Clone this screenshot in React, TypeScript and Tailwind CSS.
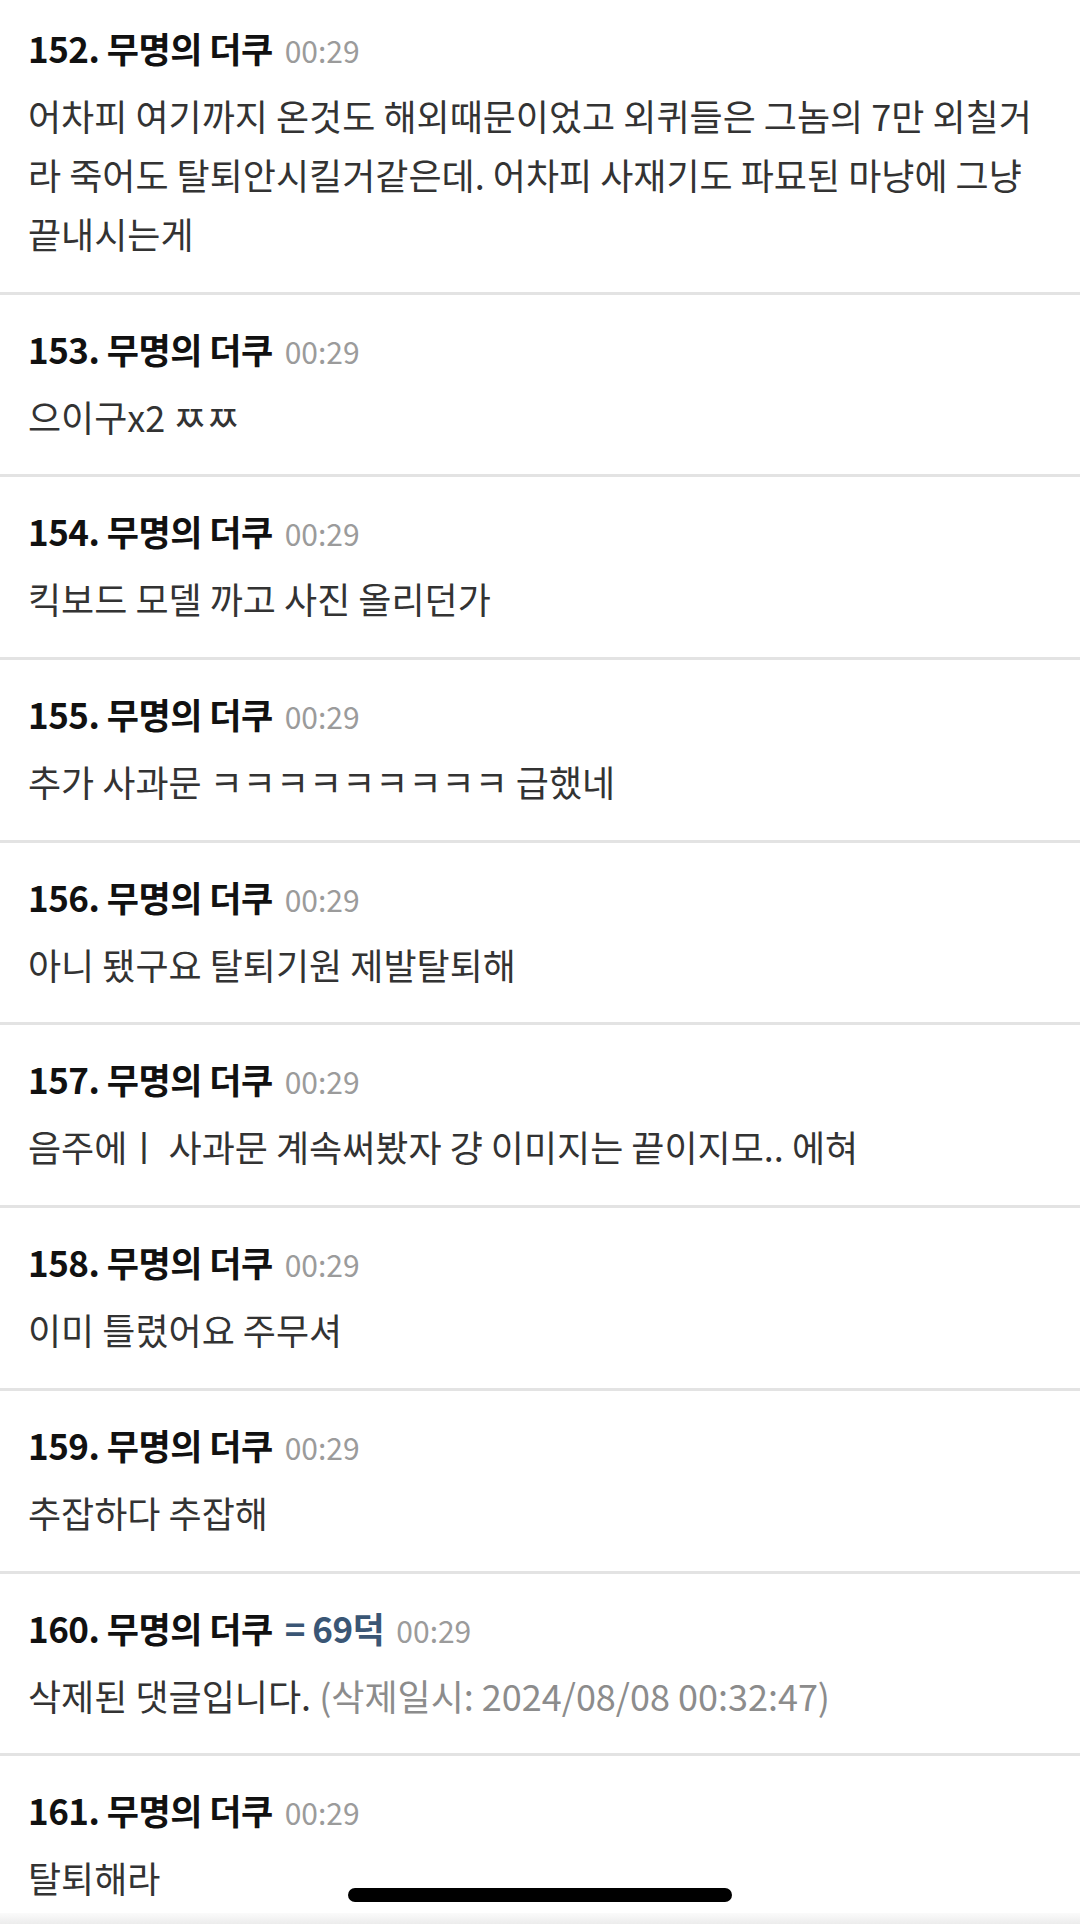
type Comment = {
  no: number;
  time: string;
  lines: string[];
  badge?: string;
  deletedAt?: string;
};

const comments: Comment[] = [
  {
    no: 152,
    time: '00:29',
    lines: [
      '어차피 여기까지 온것도 해외때문이었고 외퀴들은 그놈의 7만 외칠거',
      '라 죽어도 탈퇴안시킬거같은데. 어차피 사재기도 파묘된 마냥에 그냥',
      '끝내시는게',
    ],
  },
  { no: 153, time: '00:29', lines: ['으이구x2 ㅉㅉ'] },
  { no: 154, time: '00:29', lines: ['킥보드 모델 까고 사진 올리던가'] },
  { no: 155, time: '00:29', lines: ['추가 사과문 ㅋㅋㅋㅋㅋㅋㅋㅋㅋ 급했네'] },
  { no: 156, time: '00:29', lines: ['아니 됐구요 탈퇴기원 제발탈퇴해'] },
  { no: 157, time: '00:29', lines: ['음주에ㅣ 사과문 계속써봤자 걍 이미지는 끝이지모.. 에혀'] },
  { no: 158, time: '00:29', lines: ['이미 틀렸어요 주무셔'] },
  { no: 159, time: '00:29', lines: ['추잡하다 추잡해'] },
  {
    no: 160,
    time: '00:29',
    badge: '= 69덕',
    lines: ['삭제된 댓글입니다.'],
    deletedAt: '(삭제일시: 2024/08/08 00:32:47)',
  },
  { no: 161, time: '00:29', lines: ['탈퇴해라'] },
];

function CommentRow({ c, first }: { c: Comment; first: boolean }) {
  return (
    <div className={first ? 'mt-[-6px]' : ''}>
      {!first && <div className="h-[3px] bg-[#e3e3e3]" />}
      <div className="pl-[28px] pr-[20px] pt-[30px] pb-[28.7px]">
        {/* header: number, nickname, time */}
        <div className="flex items-baseline h-[48px] leading-[48px] whitespace-nowrap">
          <span className="text-[35px] font-bold text-[#111] tracking-[-0.5px]">
            {c.no}. 무명의 더쿠
          </span>
          {c.badge && (
            <span className="ml-[12px] text-[35px] font-bold text-[#3a5675] tracking-[-0.5px]">
              {c.badge}
            </span>
          )}
          <span className="ml-[12px] text-[30px] text-[#9b9b9b]">{c.time}</span>
        </div>

        {/* body */}
        <div className="mt-[14px] text-[36px] leading-[59px] text-[#333] whitespace-nowrap">
          {c.lines.map((line, i) => (
            <div key={i}>
              {line}
              {c.deletedAt && i === c.lines.length - 1 && (
                <span className="text-[#8c8c8c]"> {c.deletedAt}</span>
              )}
            </div>
          ))}
        </div>
      </div>
    </div>
  );
}

export default function App() {
  return (
    <div className="relative h-[1924px] w-[1080px] overflow-hidden bg-white font-['Noto_Sans_CJK_KR','Noto_Sans',sans-serif]">
      {comments.map((c, i) => (
        <CommentRow key={c.no} c={c} first={i === 0} />
      ))}

      {/* bottom fade */}
      <div className="absolute bottom-0 left-0 right-0 h-[11px] bg-linear-to-b from-[#fbfbfb] to-[#ececec]" />

      {/* home indicator */}
      <div className="absolute bottom-[22px] left-1/2 -translate-x-1/2 w-[384px] h-[14px] rounded-full bg-black" />
    </div>
  );
}
